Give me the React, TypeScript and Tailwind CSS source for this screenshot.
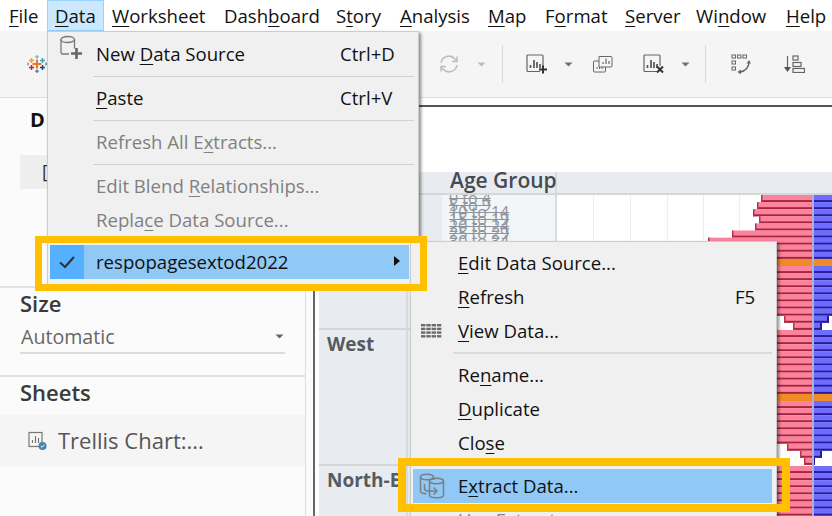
import React from "react";

const menuFont = { fontFamily: '"Open Sans", "Noto Sans", sans-serif' };

const leftEdges: number[][] = [
  [761, 757, 753, 759, 755, 732, 708, 700, 700, 700, 700, 700, 700, 700, 700, 700, 760, 784, 793],
  [770, 770, 770, 770, 770, 770, 770, 770, 770, 770, 770, 770, 770, 770, 770, 770, 787, 800, 804],
  [770, 770, 770, 770, 770, 770, 770, 770, 770],
];
const rightEdges: number[][] = [
  [840, 840, 840, 840, 840, 840, 840, 840, 840, 840, 840, 840, 840, 840, 840, 840, 840, 829, 822],
  [840, 840, 840, 840, 840, 840, 840, 840, 840, 840, 840, 840, 840, 840, 840, 840, 840, 822, 815],
  [840, 840, 840, 840, 840, 840, 840, 840, 840],
];
const ages = ["0 to 4", "5 to 9", "10 to 14", "15 to 19", "20 to 24", "25 to 29", "30 to 34"];

function Pane({ index, label, height }: { index: number; label?: string; height: number }) {
  const origin = 557;
  const rowH = 7.1;
  return (
    <div className="flex shrink-0 border-b-2 border-[#d4d6d8]" style={{ height }}>
      <div className="w-[89px] shrink-0 bg-[#e8ecf0] border-r-2 border-[#d8dadc] pl-2 pt-[1px] overflow-hidden">
        {label && <span className="text-[19px] font-bold text-[#555b60] whitespace-nowrap leading-[26px]">{label}</span>}
      </div>
      <div className="w-[34px] shrink-0 bg-[#e8ecf0]" />
      <div className="w-[115px] shrink-0 bg-[#f3f6f8] border-r-2 border-[#d8dadc] pl-[7px] overflow-hidden">
        {index === 0 &&
          ages.map((a) => (
            <div key={a} className="h-[7.1px] leading-[7.1px] text-[16px] text-[#8f949b] whitespace-nowrap line-through">
              {a}
            </div>
          ))}
      </div>
      <svg className="grow bg-white" width="275" height={height} viewBox={`0 0 275 ${height}`}>
        {[593, 630, 667, 703, 739].map((x) => (
          <rect key={x} x={x - origin} y={0} width={1} height={height} fill="#eeeeee" />
        ))}
        {leftEdges[index].map((l, i) => {
          const y = i * rowH;
          const orange = i === 9;
          return (
            <g key={i}>
              <rect x={l - origin} y={y} width={812 - l} height={rowH} fill={orange ? "#f08c28" : "#fd829c"} />
              {!orange && <rect x={l - origin} y={y + rowH - 2} width={812 - l} height={2} fill="#a5253f" />}
              {!orange && <rect x={l - origin} y={y} width={1.5} height={rowH} fill="#b8324e" />}
              <rect x={814 - origin} y={y} width={rightEdges[index][i] - 814} height={rowH} fill={orange ? "#f08c28" : "#6c6cff"} />
              {!orange && <rect x={814 - origin} y={y + rowH - 2} width={rightEdges[index][i] - 814} height={2} fill="#2a1a98" />}
              {!orange && rightEdges[index][i] < 832 && (
                <rect x={rightEdges[index][i] - origin - 2} y={y} width={2} height={rowH} fill="#2a1a98" />
              )}
            </g>
          );
        })}
        <rect x={812 - origin} y={0} width={2} height={height} fill="#aab0dc" />
      </svg>
    </div>
  );
}

function MenuSep({ ml, mr }: { ml: string; mr: string }) {
  return (
    <div className={`h-[10px] flex items-center ${ml} ${mr}`}>
      <div className="h-[1px] w-full bg-[#d2d2d2]" />
    </div>
  );
}

function Row({
  children,
  short,
  disabled,
  icon,
  shortW,
  textLeft,
  active,
}: {
  children: React.ReactNode;
  short?: string;
  disabled?: boolean;
  icon?: React.ReactNode;
  shortW: string;
  textLeft: string;
  active?: boolean;
}) {
  return (
    <div className={`h-[34px] flex items-center ${active ? "bg-[#90c8f6]" : ""} ${disabled ? "text-[#808080]" : "text-[#111111]"}`}>
      <div className={`${textLeft} shrink-0 flex items-center justify-center`}>{icon}</div>
      <div className="flex-1 whitespace-nowrap">{children}</div>
      {short && <div className={`${shortW} shrink-0 whitespace-nowrap`}>{short}</div>}
    </div>
  );
}

function Caret({ color = "#707070" }: { color?: string }) {
  return (
    <svg width="9" height="5" viewBox="0 0 9 5">
      <path d="M0.5 0.5h8L4.5 4.5z" fill={color} />
    </svg>
  );
}

function TableauLogo() {
  return (
    <svg width="20" height="20" viewBox="0 0 20 20" strokeWidth="1.5" fill="none">
      <path d="M10 5.5v9M5.5 10h9" stroke="#e8762b" strokeWidth="2" />
      <path d="M4.5 4v5M2 6.5h5" stroke="#e8a03b" />
      <path d="M15.5 4v5M13 6.5h5" stroke="#4f9cb0" />
      <path d="M4.5 11v5M2 13.5h5" stroke="#c72035" />
      <path d="M15.5 11v5M13 13.5h5" stroke="#1f457e" />
      <path d="M10 1v3.5M8.2 2.8h3.6" stroke="#7fa8b8" strokeWidth="1.2" />
      <path d="M10 15.5V19M8.2 17.2h3.6" stroke="#5c6692" strokeWidth="1.2" />
      <path d="M1 8.5v3M0 10h2" stroke="#7099a6" strokeWidth="1" />
      <path d="M19 8.5v3M18 10h2" stroke="#59879b" strokeWidth="1" />
    </svg>
  );
}

function ChartIcon({ badge }: { badge: "plus" | "x" }) {
  return (
    <svg width="23" height="20" viewBox="0 0 23 20" fill="none">
      <path d="M14 17.5H2a1 1 0 0 1-1-1V2a1 1 0 0 1 1-1h14a1 1 0 0 1 1 1v10" stroke="#666" strokeWidth="1.2" />
      <path d="M4.5 14v-3M8 14V6M11 14V8M14 14v-4" stroke="#555" strokeWidth="1.7" />
      {badge === "plus" ? (
        <path d="M17 11.5v8M13 15.5h8" stroke="#333" strokeWidth="2" />
      ) : (
        <path d="M14 12.5l6 6M20 12.5l-6 6" stroke="#333" strokeWidth="2" />
      )}
    </svg>
  );
}

function Toolbar() {
  return (
    <div className="h-[67px] bg-[#f5f5f5] border-b border-[#e0e0e0] flex items-center pl-[27px] shrink-0">
      <div className="w-[20px] -mt-[1px]">
        <TableauLogo />
      </div>
      <div className="ml-[392px] flex items-center h-full">
        <svg width="20" height="20" viewBox="0 0 20 20" fill="none" stroke="#bdbdbd" strokeWidth="1.5">
          <path d="M2 9a8 8 0 0 1 14-4l2 2" />
          <path d="M18 2.5v5h-5" />
          <path d="M18 11a8 8 0 0 1-14 4l-2-2" />
          <path d="M2 17.5v-5h5" />
        </svg>
        <div className="ml-[18px]">
          <Caret color="#bcbcbc" />
        </div>
        <div className="ml-[16px] h-[38px] w-[1px] bg-[#d8d8d8]" />
        <div className="ml-[23px]">
          <ChartIcon badge="plus" />
        </div>
        <div className="ml-[15px]">
          <Caret />
        </div>
        <svg className="ml-[20px]" width="20" height="18" viewBox="0 0 20 18" fill="none" stroke="#666" strokeWidth="1">
          <path d="M6 1.5h12a1 1 0 0 1 1 1V11a1 1 0 0 1-1 1H6z" fill="#f5f5f5" />
          <path d="M10 9V7M13 9V3.5M16 9V6" strokeWidth="1.2" />
          <path d="M6 6H1.5a1 1 0 0 0-1 1v9a1 1 0 0 0 1 1h10a1 1 0 0 0 1-1v-4" />
          <path d="M4 14v-2M6.5 14v-2M9 14v-2" />
        </svg>
        <div className="ml-[30px]">
          <ChartIcon badge="x" />
        </div>
        <div className="ml-[15px]">
          <Caret />
        </div>
        <div className="ml-[15px] h-[38px] w-[1px] bg-[#d8d8d8]" />
        <svg className="ml-[25px]" width="20" height="20" viewBox="0 0 20 20" fill="none" stroke="#666" strokeWidth="1">
          <rect x="1" y="1" width="3.5" height="3" />
          <rect x="6.5" y="1" width="3.5" height="3" />
          <rect x="12" y="1" width="3.5" height="3" />
          <rect x="1" y="7" width="3.5" height="3" />
          <rect x="1" y="13" width="3.5" height="3" />
          <path d="M18 8a10 10 0 0 1-9 10" strokeWidth="1.4" />
          <path d="M15.5 9.5L18 6l2 3.5z" fill="#666" stroke="none" />
          <path d="M10 15.5v5L6.5 18z" fill="#666" stroke="none" />
        </svg>
        <svg className="ml-[33px]" width="21" height="18" viewBox="0 0 21 18" fill="none" stroke="#666" strokeWidth="1.2">
          <path d="M3.5 1v14" />
          <path d="M0 12l3.5 5L7 12z" fill="#555" stroke="none" />
          <rect x="9" y="1" width="5" height="4" />
          <rect x="9" y="7.5" width="8" height="4" />
          <rect x="9" y="13.5" width="11.5" height="4" />
        </svg>
      </div>
    </div>
  );
}

function Sidebar() {
  return (
    <div className="w-[306px] h-full shrink-0 bg-[#fbfbfb] border-r border-[#dddddd] flex flex-col text-[#333]">
      <div className="h-[57px] pl-[30px] pt-[6px] text-[20px] font-bold text-[#111] leading-[32px]">D</div>
      <div className="ml-[20px] w-[40px] h-[34px] bg-[#eeeeee] pl-[22px] text-[18px] leading-[32px] text-[#333]">[</div>
      <div className="h-[99px] border-b-2 border-[#e2e2e2]" />
      <div className="h-[89px] border-b-2 border-[#e2e2e2] pl-[20px] pt-[1px] flex flex-col">
        <div className="text-[22px] font-semibold leading-[28px] text-[#3a3a3a]">Size</div>
        <div className="mt-[4px] w-[265px] h-[33px] border-b-2 border-[#dcdcdc] flex items-center justify-between pr-[1px] pl-[1px]">
          <span className="text-[19.6px] text-[#666]">Automatic</span>
          <Caret color="#666" />
        </div>
      </div>
      <div className="h-[38px] pl-[20px] text-[22px] font-semibold leading-[30px] text-[#3a3a3a]">Sheets</div>
      <div className="h-[51px] bg-[#f5f5f5] flex items-center pl-[28px] gap-[11px]">
        <svg width="19" height="20" viewBox="0 0 19 20" fill="none">
          <rect x="1" y="1.5" width="13" height="14" stroke="#777" strokeWidth="1.2" />
          <path d="M4.5 12V9M7.5 12V5M10.5 12V7" stroke="#777" strokeWidth="1.2" />
          <circle cx="14.5" cy="15" r="4" fill="#3f88ab" />
          <path d="M12.7 15l1.3 1.3 2.3-2.5" stroke="#fff" strokeWidth="1" />
        </svg>
        <span className="text-[22px] text-[#555]">Trellis Chart:...</span>
      </div>
    </div>
  );
}

function Chart() {
  return (
    <div className="flex-1 min-w-0 h-full flex flex-col pt-[7px] bg-white overflow-hidden">
      <div className="h-[2px] shrink-0 bg-[#555555]" />
      <div className="h-[65px] shrink-0" />
      <div className="flex shrink-0 h-[23px] bg-[#e8ecf0] border-b-2 border-[#d4d6d8]">
        <div className="w-[131px]" />
        <div className="text-[21px] font-semibold leading-[17px] text-[#444b52] w-[107px] whitespace-nowrap border-r-2 border-[#d8dadc]">Age Group</div>
      </div>
      <Pane index={0} height={135} />
      <Pane index={1} label="West" height={136} />
      <Pane index={2} label="North-East" height={60} />
    </div>
  );
}

function DbPlus() {
  return (
    <svg width="24" height="26" viewBox="0 0 24 26" fill="none" stroke="#777" strokeWidth="1.3">
      <path d="M15.5 4.5v9M2 4.5V17a2 2 0 0 0 2 2h6" />
      <ellipse cx="8.7" cy="4.5" rx="6.8" ry="3" />
      <path d="M17.5 13v11M12 18.5h11" strokeWidth="2.6" stroke="#666" />
    </svg>
  );
}

function GridIcon() {
  return (
    <svg width="21" height="15" viewBox="0 0 21 15" fill="#6a6a6a">
      {[0, 3.7, 7.4, 11.1].map((y) =>
        [0, 5.3, 10.6, 15.9].map((x) => <rect key={`${x}-${y}`} x={x} y={y} width={4.4} height={2.4} />)
      )}
    </svg>
  );
}

function ExtractIcon() {
  return (
    <svg width="26" height="26" viewBox="0 0 26 26" fill="none" stroke="#7a7f85" strokeWidth="1.5">
      <ellipse cx="8" cy="4" rx="6.5" ry="2.8" />
      <path d="M1.5 4v14c0 1.5 2.5 2.6 6 2.8" />
      <path d="M14.5 4v3" />
      <ellipse cx="17.5" cy="8" rx="7" ry="2.8" />
      <path d="M10.5 8v14c0 1.6 3 2.8 7 2.8s7-1.2 7-2.8V8" />
      <path d="M5.5 11v4a3 3 0 0 0 3 3h9" />
      <path d="M14.5 14.5l3.5 3.5-3.5 3.5" />
    </svg>
  );
}

const U = ({ children }: { children: React.ReactNode }) => <u className="underline underline-offset-[3px] decoration-[1px]">{children}</u>;

function DataMenu() {
  const p = { shortW: "w-[69px]", textLeft: "w-[46px]" };
  return (
    <div className="absolute left-[47px] top-[31px] w-[372px] h-[254px] bg-[#f0f0f0] border border-[#cccccc] shadow-[2px_2px_3px_rgba(0,0,0,0.45)] pl-[2px] pr-[9px] pt-[5px] text-[18.6px] leading-[24px]">
      <Row {...p} short="Ctrl+D" icon={<div className="-mt-[12px] -ml-[4px]"><DbPlus /></div>}>
        New <U>D</U>ata Source
      </Row>
      <MenuSep ml="ml-[43px]" mr="-mr-[5px]" />
      <Row {...p} short="Ctrl+V">
        <U>P</U>aste
      </Row>
      <MenuSep ml="ml-[43px]" mr="-mr-[5px]" />
      <Row {...p} disabled>
        Refresh All E<U>x</U>tracts...
      </Row>
      <MenuSep ml="ml-[43px]" mr="-mr-[5px]" />
      <Row {...p} disabled>
        Edit Blend <U>R</U>elationships...
      </Row>
      <Row {...p} disabled>
        Repla<U>c</U>e Data Source...
      </Row>
      <div className="h-[8px]" />
      <div className="h-[34px] flex items-center bg-[#90c8f6] text-[#111]">
        <div className="w-[34px] h-full bg-[#55b0ff] flex items-center justify-center">
          <svg width="18" height="14" viewBox="0 0 18 14" fill="none">
            <path d="M2 7.5l5 4.5L16 2" stroke="#333" strokeWidth="2.2" />
          </svg>
        </div>
        <div className="pl-[12px] flex-1">respopagesextod2022</div>
        <svg className="mr-[9px] -mt-[2px]" width="6" height="10" viewBox="0 0 6 10">
          <path d="M0 0l6 5-6 5z" fill="#111" />
        </svg>
      </div>
    </div>
  );
}

function SubMenu() {
  const p = { shortW: "w-[37px]", textLeft: "w-[45px]" };
  return (
    <div className="absolute left-[410px] top-[241px] w-[367px] h-[290px] bg-[#f0f0f0] border border-[#cccccc] shadow-[2px_2px_3px_rgba(0,0,0,0.45)] pl-[2px] pr-[4px] pt-[4px] text-[18.6px] leading-[24px]">
      <Row {...p}>
        <U>E</U>dit Data Source...
      </Row>
      <Row {...p} short="F5">
        <U>R</U>efresh
      </Row>
      <Row {...p} icon={<div className="-ml-[8px]"><GridIcon /></div>}>
        <U>V</U>iew Data...
      </Row>
      <div className="h-[10px] flex items-center ml-[40px]">
        <div className="h-[2px] w-full bg-[#dcdcdc]" />
      </div>
      <Row {...p}>
        Re<U>n</U>ame...
      </Row>
      <Row {...p}>
        <U>D</U>uplicate
      </Row>
      <Row {...p}>
        Clo<U>s</U>e
      </Row>
      <div className="h-[9px]" />
      <Row {...p} active icon={<div className="-ml-[8px]"><ExtractIcon /></div>}>
        E<U>x</U>tract Data...
      </Row>
      <Row {...p} disabled>
        Use Extract
      </Row>
    </div>
  );
}

const menus: { w: string; node: React.ReactNode }[] = [
  { w: "w-[47px] pl-[9px]", node: <><U>F</U>ile</> },
  { w: "w-[57px] pl-[7px] bg-[#cce8ff] border border-[#99d1ff]", node: <><U>D</U>ata</> },
  { w: "w-[112px] pl-[8px]", node: <><U>W</U>orksheet</> },
  { w: "w-[112px] pl-[8px]", node: <>Dash<U>b</U>oard</> },
  { w: "w-[64px] pl-[8px]", node: <>S<U>t</U>ory</> },
  { w: "w-[88px] pl-[8px]", node: <><U>A</U>nalysis</> },
  { w: "w-[57px] pl-[8px]", node: <><U>M</U>ap</> },
  { w: "w-[80px] pl-[8px]", node: <>F<U>o</U>rmat</> },
  { w: "w-[71px] pl-[8px]", node: <><U>S</U>erver</> },
  { w: "w-[90px] pl-[8px]", node: <>Wi<U>n</U>dow</> },
  { w: "w-[54px] pl-[8px]", node: <><U>H</U>elp</> },
];

export default function App() {
  return (
    <div className="relative w-[832px] h-[516px] overflow-hidden bg-white flex flex-col" style={menuFont}>
      <div className="h-[31px] flex items-center shrink-0 text-[18.6px] text-[#111] bg-white">
        {menus.map((m, i) => (
          <div key={i} className={`h-full shrink-0 flex items-center whitespace-nowrap ${m.w}`}>
            {m.node}
          </div>
        ))}
      </div>
      <Toolbar />
      <div className="flex-1 min-h-0 flex">
        <Sidebar />
        <div className="w-[7px] shrink-0 bg-[#fbfbfb]" />
        <div className="w-[2px] shrink-0 bg-[#666666]" />
        <div className="w-[4px] shrink-0 bg-white" />
        <Chart />
      </div>
      <DataMenu />
      <SubMenu />
      <div className="absolute left-[35px] top-[236px] w-[392px] h-[55px] border-[7px] border-[#ffc000]" />
      <div className="absolute left-[398px] top-[458px] w-[392px] h-[54px] border-[8px] border-[#ffc000]" />
    </div>
  );
}
